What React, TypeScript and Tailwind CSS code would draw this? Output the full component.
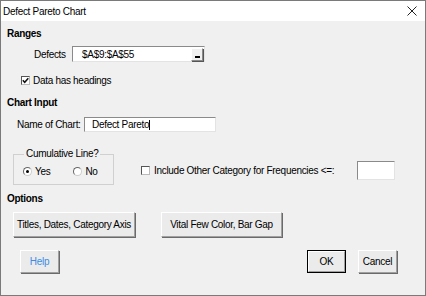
import React from "react";

const font = "font-['Liberation_Sans',Arial,sans-serif] text-[10px] tracking-[-0.3px] text-black";

function Btn({ children, className = "", blue = false }: { children: React.ReactNode; className?: string; blue?: boolean }) {
  return (
    <div
      className={`flex items-center justify-center bg-[#ebebeb] border border-t-white border-l-white border-b-[#a0a0a0] border-r-[#a0a0a0] shadow-[1px_1px_0_#6a6a6a] ${blue ? "text-[#3b8de6]" : ""} ${className}`}
    >
      {children}
    </div>
  );
}

function Check({ checked }: { checked: boolean }) {
  return (
    <div className="w-[9px] h-[9px] bg-white border border-t-[#555] border-l-[#555] border-b-[#bbb] border-r-[#bbb] flex items-center justify-center">
      {checked && (
        <svg width="7" height="7" viewBox="0 0 7 7">
          <path d="M0.8 3.3 L2.7 5.3 L6.3 1.2" stroke="#111" strokeWidth="1.5" fill="none" />
        </svg>
      )}
    </div>
  );
}

function Radio({ checked }: { checked: boolean }) {
  return (
    <div className="w-[9px] h-[9px] rounded-full bg-white border border-t-[#666] border-l-[#666] border-b-[#ccc] border-r-[#ccc] flex items-center justify-center">
      {checked && <div className="w-[3px] h-[3px] rounded-full bg-black" />}
    </div>
  );
}

export default function App() {
  return (
    <div className={`w-[426px] h-[296px] bg-[#f0f0f0] border border-[#7a7a7a] flex flex-col ${font}`}>
      <div className="h-[20px] bg-white flex items-center justify-between pl-[2px] pr-[8px] shrink-0">
        <span>Defect Pareto Chart</span>
        <svg width="10" height="10" viewBox="0 0 10 10">
          <path d="M0.5 0.5 L9.5 9.5 M9.5 0.5 L0.5 9.5" stroke="#222" strokeWidth="1" />
        </svg>
      </div>
      <div className="flex flex-col">
        <div className="mt-[6px] h-[12px] ml-[6px] flex items-center font-bold">Ranges</div>

        <div className="mt-[7px] h-[16px] flex items-center">
          <span className="ml-[33px] w-[38px]">Defects</span>
          <div className="w-[133px] h-[16px] bg-white border border-t-[#8a8a8a] border-l-[#8a8a8a] border-b-[#e3e3e3] border-r-[#e3e3e3] flex items-center">
            <span className="ml-[9px] flex-1">$A$9:$A$55</span>
            <div className="w-[12px] h-[13px] mr-[1px] bg-[#f0f0f0] border border-t-white border-l-white border-b-[#8a8a8a] border-r-[#8a8a8a] shadow-[1px_1px_0_#555] flex items-end justify-center pb-[2px]">
              <div className="w-[5px] h-[2px] bg-black" />
            </div>
          </div>
        </div>

        <div className="mt-[13px] h-[10px] flex items-center ml-[20px]">
          <Check checked />
          <span className="ml-[3px]">Data has headings</span>
        </div>

        <div className="mt-[11px] h-[12px] ml-[6px] flex items-center font-bold">Chart Input</div>

        <div className="mt-[9px] h-[15px] flex items-center">
          <span className="ml-[16px] w-[67px]">Name of Chart:</span>
          <div className="w-[132px] h-[15px] bg-white border border-t-[#8a8a8a] border-l-[#8a8a8a] border-b-[#e3e3e3] border-r-[#e3e3e3] flex items-center">
            <span className="ml-[7px]">Defect Pareto</span>
            <div className="w-px h-[10px] bg-black" />
          </div>
        </div>

        <div className="mt-[16px] flex items-start">
          <fieldset className="ml-[12px] w-[101px] border border-[#d0d0d0] pb-[8px]">
            <legend className="ml-[10px] px-[2px] h-[12px] leading-[12px]">Cumulative Line?</legend>
            <div className="mt-[6px] h-[10px] flex items-center">
              <div className="ml-[9px]"><Radio checked /></div>
              <span className="ml-[3px]">Yes</span>
              <div className="ml-[23px]"><Radio checked={false} /></div>
              <span className="ml-[3px]">No</span>
            </div>
          </fieldset>
          <div className="mt-[13px] h-[19px] flex items-center">
            <div className="ml-[27px]"><Check checked={false} /></div>
            <span className="ml-[4px] w-[203px]">Include Other Category for Frequencies &lt;=:</span>
            <div className="w-[38px] h-[19px] bg-white border border-t-[#8a8a8a] border-l-[#8a8a8a] border-b-[#e3e3e3] border-r-[#e3e3e3]" />
          </div>
        </div>

        <div className="mt-[7px] h-[12px] ml-[6px] flex items-center font-bold">Options</div>

        <div className="mt-[8px] h-[25px] flex">
          <Btn className="ml-[12px] w-[122px] h-[25px]">Titles, Dates, Category Axis</Btn>
          <Btn className="ml-[26px] w-[121px] h-[25px]">Vital Few Color, Bar Gap</Btn>
        </div>

        <div className="mt-[13px] h-[23px] flex">
          <Btn className="ml-[19px] w-[39px] h-[23px]" blue>Help</Btn>
          <div className="ml-[248px] w-[39px] h-[23px] border border-black flex">
            <Btn className="w-full h-full shadow-none">OK</Btn>
          </div>
          <Btn className="ml-[12px] w-[39px] h-[23px]">Cancel</Btn>
        </div>
      </div>
    </div>
  );
}
